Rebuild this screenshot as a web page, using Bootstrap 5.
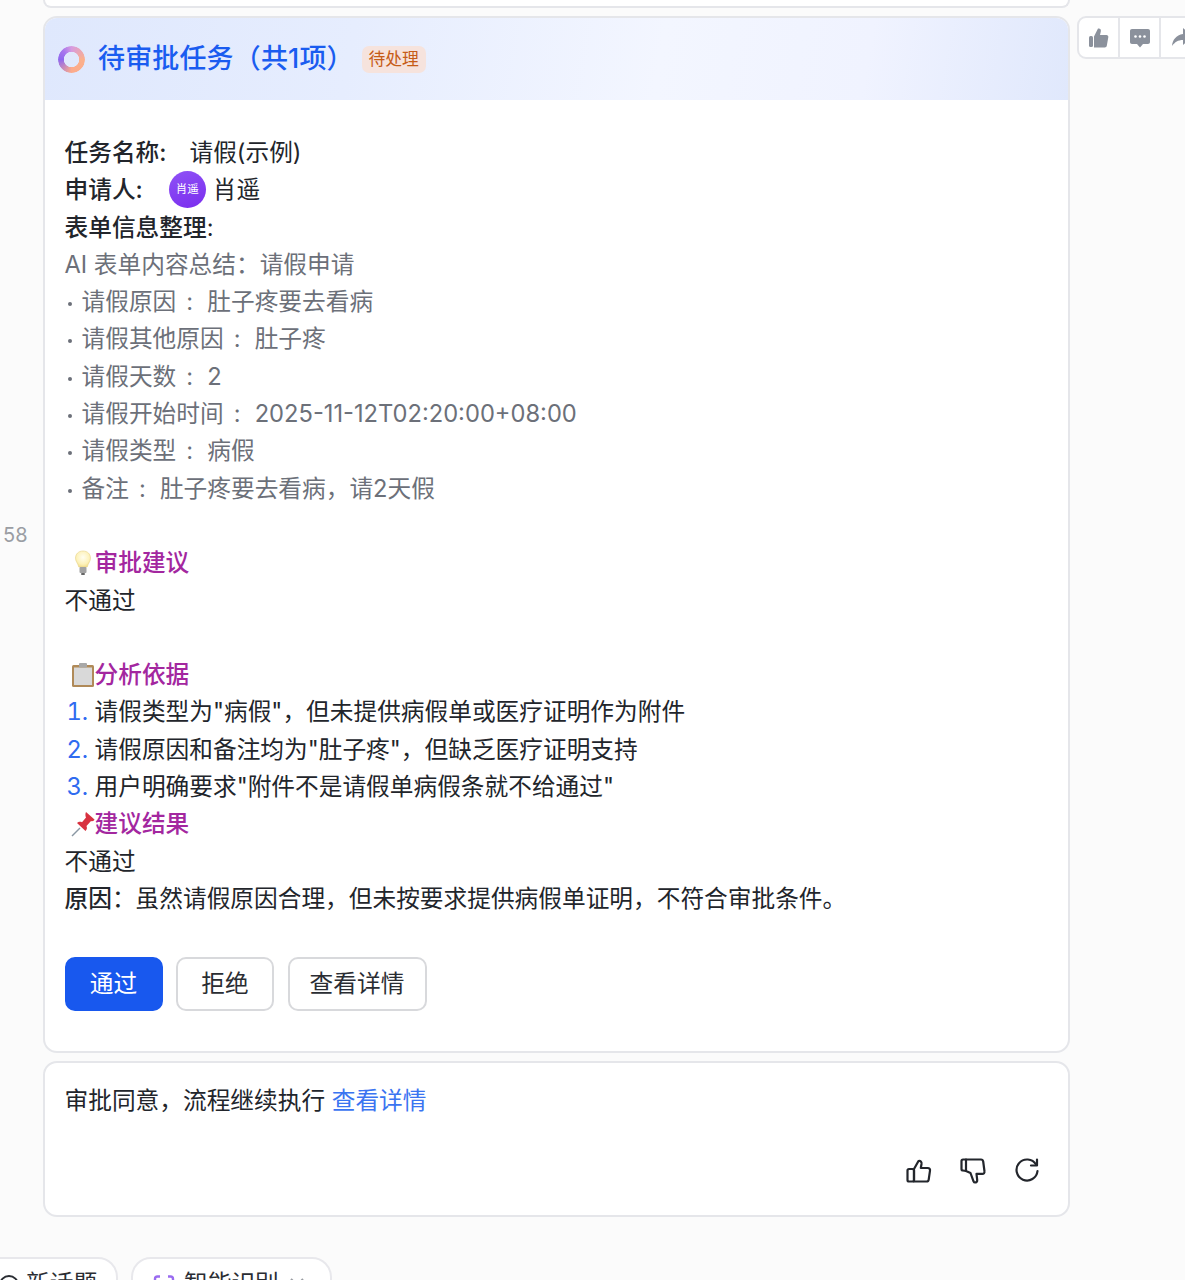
<!DOCTYPE html>
<html lang="zh">
<head>
<meta charset="utf-8">
<title>待审批任务</title>
<link href="https://cdn.jsdelivr.net/npm/bootstrap@5.3.0/dist/css/bootstrap.min.css" rel="stylesheet">
<script src="https://cdn.jsdelivr.net/npm/bootstrap@5.3.0/dist/js/bootstrap.bundle.min.js"></script>
<style>
html,body{height:1280px;overflow:hidden;background:#fbfbfb}
body{font-family:Inter,"Noto Sans CJK SC",sans-serif;font-size:23.7px;line-height:37.3px;color:#22252b}
.page{width:1185px;height:1280px;overflow:hidden}
.gutter{width:43px;flex:none;color:#9a9da3;font-size:20px;padding:3px 0 0 3px}
.maincol{width:1027px;flex:none}
.msgcard{background:#fff;border:2px solid #e5e6ea;border-radius:14px}
.topstub{height:8px;border-top:0;border-radius:0 0 14px 14px;margin-left:43px;width:1027px;margin-bottom:8px}
.cardhead{height:82px;padding-left:13px;background:linear-gradient(100deg,#dfe8fd 0%,#e6edfe 30%,#f3f6ff 60%,#f0f3ff 80%,#e0e8fc 100%);border-radius:12px 12px 0 0}
.ringlogo{width:27px;height:27px;border-radius:50%;background:conic-gradient(from 0deg,#d79be0,#fbb08c 25%,#fcab8c 50%,#8f68ee 75%,#a777ee 88%,#d79be0);-webkit-mask:radial-gradient(circle,transparent 7.4px,#000 8px);mask:radial-gradient(circle,transparent 7.4px,#000 8px);flex:none}
.headtitle{color:#1a5cf0;font-size:27px;font-weight:500;margin-left:13px;line-height:1.2;letter-spacing:.15px}
.statuschip{background:#f6e3dd;color:#c65c17;font-size:16.8px;line-height:27px;width:64px;text-align:center;border-radius:7px;margin-left:8px}
.cardmain{padding:34px 20px 40px 19.5px}
.lbl{font-weight:500;color:#22252b}
.valgap{margin-left:23px}
.avatargap{margin-left:26px;margin-right:7px}
.avatarchip{width:37px;height:37px;border-radius:50%;background:linear-gradient(160deg,#8f52f6,#7a2dee);color:#fff;font-size:11.5px;line-height:37px;text-align:center;display:inline-block;vertical-align:top}
.graytext{color:#6c7079}
.kvsep{display:inline-block;width:31px;text-align:center;padding-right:4px}
.dotlist{list-style:none;margin:0;padding:0}
.dotlist li::before{content:"";display:inline-block;width:4px;height:4px;border-radius:50%;background:#6c7079;margin:0 10px 4px 3px}
.sechead{color:#a3279f;font-weight:500}
.sechead svg{width:24px;height:26px;vertical-align:-5px;margin-left:6px}
.numlist{margin:0;padding-left:30px}
.numlist li::marker{color:#2f6bf0}
.blankline{height:37.3px}
.actrow{gap:13.5px;margin-top:39.5px}
.actbtn{height:54px;font-size:23.7px;border-radius:10px;padding:0;line-height:50px;--bs-btn-padding-y:0}
.btn-go{width:98px;background:#1858ee;border:2px solid #1858ee;color:#fff}
.btn-line{background:#fff;border:2px solid #d8d9dc;color:#2a2d33}
.wa{width:98px}.wb{width:139px}
.replycard{height:156px;margin:8px 0 0 43px;width:1027px;padding:19.5px 20px 0 19.5px}
.replylink{color:#3a74f1;text-decoration:none}
.replyicons{margin-top:37px;padding-right:7px;gap:26px}
.sidetools{margin-left:7px;flex:none;height:43px;width:130px;border:2px solid #e5e6ea;border-radius:9px;background:#fff}
.toolcell{width:41px;flex:none;border-right:2px solid #e5e6ea}
.chiprow{margin:40px 0 0 -18px;gap:13px}
.inputchip{height:60px;background:#fff;border:2px solid #e8e8ec;border-radius:20px 20px 0 0;padding-top:6px;color:#2a2d33;white-space:nowrap}
.c1{width:136px;padding-left:14px}
.c2{width:201px;padding-left:19px}
.c1 svg{margin-right:6px}
.c2 svg{margin-right:8px}
.c2 .chev{margin:0 0 0 10px}
</style>
</head>
<body>
<div class="page">
  <div class="msgcard topstub"></div>
  <div class="d-flex align-items-start">
    <div class="gutter align-self-center">58</div>
    <div class="maincol">
      <div class="msgcard">
        <div class="cardhead d-flex align-items-center">
          <span class="ringlogo"></span>
          <span class="headtitle">待审批任务（共1项）</span>
          <span class="statuschip">待处理</span>
        </div>
        <div class="cardmain">
          <div><span class="lbl">任务名称:</span><span class="valgap">请假(示例)</span></div>
          <div><span class="lbl">申请人:</span><span class="avatarchip avatargap">肖遥</span>肖遥</div>
          <div><span class="lbl">表单信息整理</span>:</div>
          <div class="graytext">AI 表单内容总结：请假申请</div>
          <ul class="dotlist graytext">
            <li>请假原因<span class="kvsep">:</span>肚子疼要去看病</li>
            <li>请假其他原因<span class="kvsep">:</span>肚子疼</li>
            <li>请假天数<span class="kvsep">:</span>2</li>
            <li>请假开始时间<span class="kvsep">:</span>2025-11-12T02:20:00+08:00</li>
            <li>请假类型<span class="kvsep">:</span>病假</li>
            <li>备注<span class="kvsep">:</span>肚子疼要去看病，请2天假</li>
          </ul>
          <div class="blankline"></div>
          <div class="sechead"><svg viewBox="0 0 24 26"><defs><radialGradient id="bulb" cx=".5" cy=".4" r=".7"><stop offset="0" stop-color="#fffef0"/><stop offset=".6" stop-color="#fdf2bb"/><stop offset="1" stop-color="#efd77a"/></radialGradient></defs><path d="M12 1c-4.500 0-7.500 3-7.500 7.200 0 3.400 2.500 5.200 3.300 8.800h8.400c.8-3.600 3.300-5.400 3.300-8.800C19.500 4 16.500 1 12 1z" fill="url(#bulb)" stroke="#e8d48c" stroke-width=".6"/><rect x="8.500" y="17" width="7" height="6" rx="1" fill="#a3a3a3"/><rect x="10" y="23" width="4" height="2" rx="1" fill="#666"/></svg>审批建议</div>
          <div>不通过</div>
          <div class="blankline"></div>
          <div class="sechead"><svg viewBox="0 0 24 26"><rect x="1" y="3" width="22" height="22" rx="1.500" fill="#b08a58"/><rect x="3" y="5.500" width="18" height="17.500" fill="#d9d9d9"/><rect x="8" y="1" width="8" height="4.500" rx="1" fill="#a8a8a8"/></svg>分析依据</div>
          <ol class="numlist">
            <li>请假类型为"病假"，但未提供病假单或医疗证明作为附件</li>
            <li>请假原因和备注均为"肚子疼"，但缺乏医疗证明支持</li>
            <li>用户明确要求"附件不是请假单病假条就不给通过"</li>
          </ol>
          <div class="sechead"><svg viewBox="0 0 24 26"><path d="M1 25l8-8" stroke="#8a97a3" stroke-width="1.400"/><path d="M15 1l8.500 7.500c-.5 1.500-2 2-3.500 1.500l-4.500 5c.8 2 .5 3.500-1 5L6 12c1.500-1.500 3.500-1.500 5-.8l4-4.700c-.8-1.500-.8-4 0-5.500z" fill="#d8313f"/></svg>建议结果</div>
          <div>不通过</div>
          <div><span class="lbl">原因</span>：虽然请假原因合理，但未按要求提供病假单证明，不符合审批条件。</div>
          <div class="d-flex actrow">
            <button type="button" class="btn actbtn btn-go">通过</button>
            <button type="button" class="btn actbtn btn-line wa">拒绝</button>
            <button type="button" class="btn actbtn btn-line wb">查看详情</button>
          </div>
        </div>
      </div>
    </div>
    <div class="sidetools d-flex">
      <div class="toolcell d-flex align-items-center justify-content-center"><svg width="22" height="22" viewBox="0 0 22 22" fill="#8b919c"><rect x="1" y="9" width="4" height="11" rx="1.500"/><path d="M6 9.500l4-8c2.200-.4 3.200 1 2.800 3L12 8h6.500c1.200 0 2 1 1.800 2.200l-1.500 8.600c-.2 1-1 1.700-2 1.700H6z"/></svg></div>
      <div class="toolcell d-flex align-items-center justify-content-center"><svg width="22" height="22" viewBox="0 0 22 22"><path d="M3 2h16c1.200 0 2 .8 2 2v11c0 1.200-.8 2-2 2h-5l-3 3.500L8 17H3c-1.200 0-2-.8-2-2V4c0-1.200.8-2 2-2z" fill="#8b919c"/><circle cx="6.500" cy="9.500" r="1.300" fill="#fff"/><circle cx="11" cy="9.500" r="1.300" fill="#fff"/><circle cx="15.500" cy="9.500" r="1.300" fill="#fff"/></svg></div>
      <div class="toolcell d-flex align-items-center justify-content-center border-0"><svg width="22" height="22" viewBox="0 0 22 22" fill="#8b919c"><path d="M12 1l10 8.500-10 8.500v-5C7 13 4 15 1 19c.5-6 4-11 11-12z"/></svg></div>
    </div>
  </div>
  <div class="msgcard replycard">
    <div>审批同意，流程继续执行 <a class="replylink" href="#">查看详情</a></div>
    <div class="d-flex justify-content-end replyicons">
      <svg width="28" height="28" viewBox="0 0 28 28" fill="none" stroke="#23262c" stroke-width="2.200" stroke-linejoin="round" stroke-linecap="round"><path d="M9 12l4.500-8c2-.5 3.300.8 3 3l-.7 4h7c1.500 0 2.500 1 2.200 2.600l-1.300 9c-.2 1.200-1 1.900-2.200 1.900H9z"/><rect x="2.500" y="12" width="6.500" height="12.500" rx="1.500"/></svg>
      <svg width="28" height="28" viewBox="0 0 28 28" fill="none" stroke="#23262c" stroke-width="2.200" stroke-linejoin="round" stroke-linecap="round"><path d="M7 2.500h15c1.300 0 2 .8 2.200 2l1.300 10c.2 1.300-.8 2.300-2 2.300h-6l.7 6.200c.2 1.600-1 2.500-2.200 2.500-.7 0-1.200-.5-1.500-1.200L11.500 16 7 14V2.500z"/><path d="M7 2.500H4C3 2.500 2.500 3.200 2.500 4v8c0 1 .5 1.500 1.500 1.500L7 14"/></svg>
      <svg width="28" height="28" viewBox="0 0 28 28" fill="none" stroke="#23262c" stroke-width="2.200" stroke-linecap="round" stroke-linejoin="round"><path d="M23 7.500A10.500 10.500 0 1 0 24.500 14"/><path d="M24 2.500v6h-6"/></svg>
    </div>
  </div>
  <div class="d-flex chiprow">
    <div class="inputchip c1"><svg width="22" height="22" viewBox="0 0 22 22" fill="none" stroke="#2a2d33" stroke-width="2" class="align-middle"><circle cx="11" cy="11" r="9"/></svg>新话题</div>
    <div class="inputchip c2"><svg width="24" height="22" viewBox="0 0 24 22" fill="none" stroke="#9a6cf0" stroke-width="2.400" class="align-middle"><path d="M3 7V5c0-1.500 1-2.500 2.500-2.500H8M16 2.500h2.500C20 2.500 21 3.500 21 5v2M3 15v2c0 1.500 1 2.500 2.500 2.500H8M16 19.500h2.500C20 19.500 21 18.500 21 17v-2"/><path d="M3 11h18" stroke="#b28cf4"/></svg>智能识别<svg class="chev align-middle" width="16" height="16" viewBox="0 0 16 16" fill="none" stroke="#9a9da3" stroke-width="2"><path d="M2 2l6 6 6-6"/></svg></div>
  </div>
</div>
</body>
</html>
